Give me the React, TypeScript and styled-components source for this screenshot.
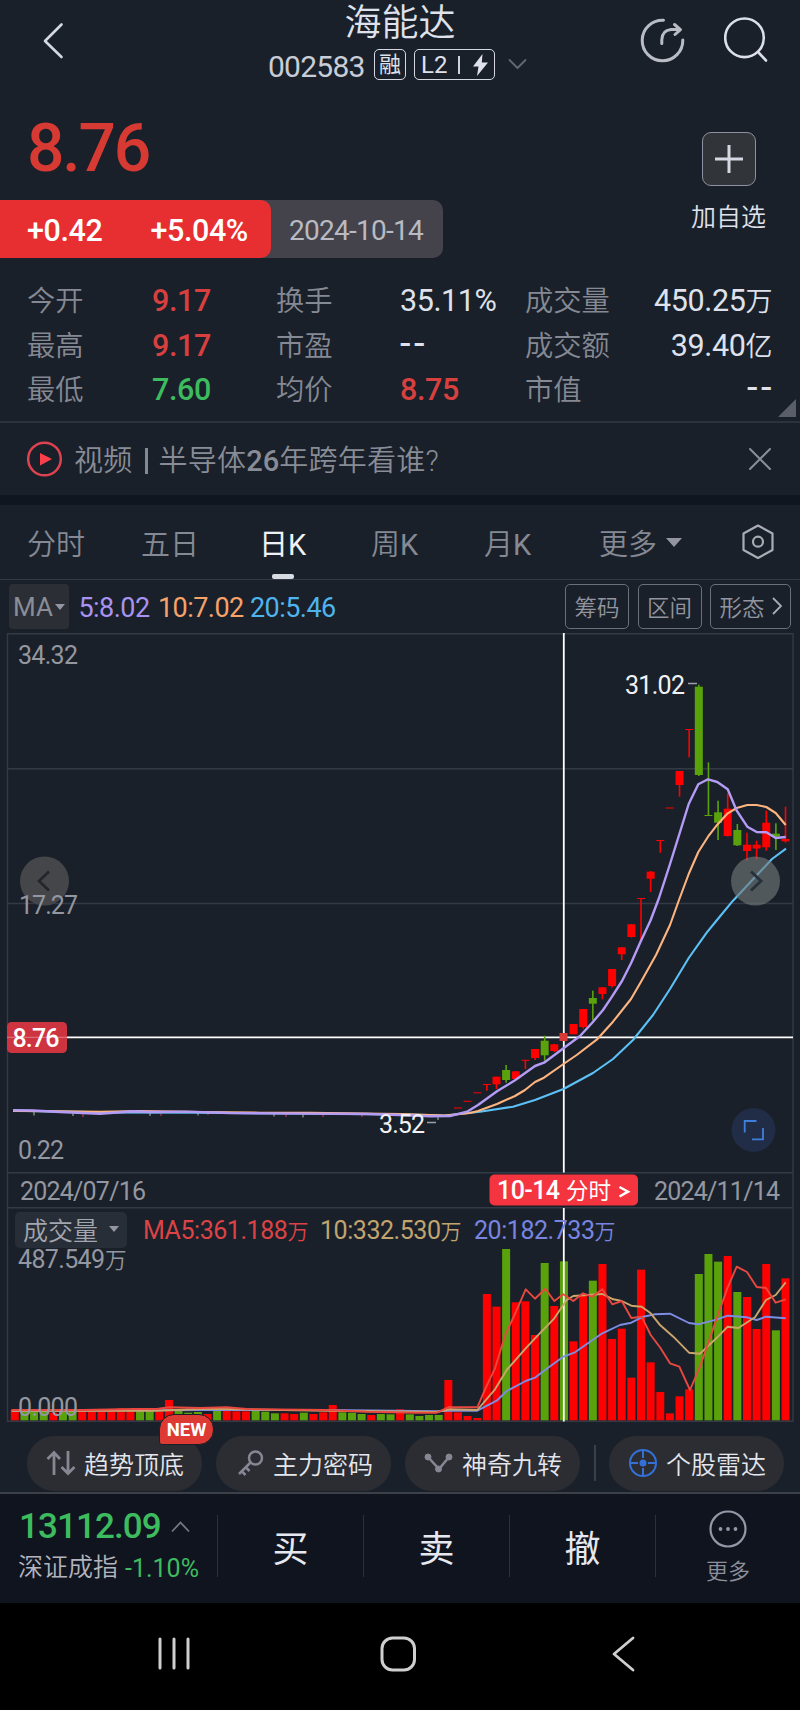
import React from "react";
import styled, { createGlobalStyle, css } from "styled-components";

const GlobalStyle = createGlobalStyle`
  * { box-sizing: border-box; }
  body {
    margin: 0;
    background: #000;
    font-family: Roboto, "Noto Sans CJK SC", sans-serif;
    color: #dfe2ec;
    -webkit-font-smoothing: antialiased;
  }
`;

const c = {
  bg: "#1a2029",
  line: "#343a45",
  muted: "#858994",
  text: "#dfe2ec",
  red: "#d8403f",
  green: "#3dbb5f",
  up: "#fe0000",
  down: "#5aa20b",
};

const Screen = styled.main`
  width: 800px;
  height: 1710px;
  display: flex;
  flex-direction: column;
  background: ${c.bg};
  overflow: hidden;
`;

/* ---------- header ---------- */
const Header = styled.header`
  display: grid;
  grid-template-columns: 200px 1fr 200px;
  height: 100px;
`;
const BackButton = styled.div`
  padding: 21px 0 0 40px;
`;
const TitleBlock = styled.div`
  display: flex;
  flex-direction: column;
  align-items: center;
`;
const StockName = styled.h1`
  margin: 0;
  padding-top: 2px;
  font-size: 37px;
  font-weight: 350;
  line-height: 44px;
`;
const CodeRow = styled.div`
  display: flex;
  align-items: center;
  height: 36px;
  margin-right: 1px;
`;
const Code = styled.span`
  font-size: 30px;
  letter-spacing: -0.75px;
  width: 106px;
  padding-top: 5px;
  color: #c9cdd8;
`;
const Tag = styled.span<{ $w: number }>`
  display: flex;
  align-items: center;
  justify-content: center;
  width: ${(p) => p.$w}px;
  height: 31px;
  margin-right: 8px;
  border: 1.6px solid #d5d8e0;
  border-radius: 5px;
  font-size: 22px;
  line-height: 28px;
  padding-top: 1px;
`;
const TagLevel = styled.span`
  font-size: 24px;
`;
const TagDivider = styled.i`
  width: 1.5px;
  height: 18px;
  margin: 0 13px 0 11px;
  background: #cfd2db;
`;
const HeaderActions = styled.div`
  display: flex;
  gap: 37px;
  padding: 15px 0 0 39px;
`;

/* ---------- price ---------- */
const Hero = styled.section`
  display: flex;
  justify-content: space-between;
  height: 158px;
`;
const HeroPrice = styled.div`
  height: 100px;
  padding: 9px 0 0 27px;
  font-size: 66px;
  line-height: 80px;
  font-weight: 500;
  letter-spacing: -2.2px;
  color: #d63a33;
`;
const ChangeBar = styled.div`
  display: flex;
  width: 443px;
  height: 58px;
  border-radius: 0 10px 10px 0;
  background: #44434b;
  line-height: 61px;
`;
const ChangePill = styled.div`
  display: flex;
  gap: 48px;
  width: 271px;
  padding-left: 27px;
  border-radius: 0 10px 10px 0;
  background: #e72e30;
  color: #fff;
  font-size: 30.5px;
  font-weight: 500;
  letter-spacing: -0.4px;
`;
const ChangeDate = styled.div`
  padding-left: 18px;
  font-size: 28px;
  letter-spacing: -0.75px;
  color: #b9bac2;
`;
const AddBlock = styled.div`
  display: flex;
  flex-direction: column;
  align-items: center;
  width: 143px;
  padding-top: 32px;
  font-size: 25px;
  font-weight: 350;
  line-height: 32px;
`;
const AddButton = styled.div`
  display: flex;
  align-items: center;
  justify-content: center;
  width: 54px;
  height: 54px;
  margin-bottom: 16px;
  border: 1.5px solid #8d90a0;
  border-radius: 9px;
  background: #313539;
`;

/* ---------- stats ---------- */
const Stats = styled.section`
  position: relative;
  display: grid;
  grid-template-columns: 125px 124px 124px 125px 85px 162px;
  grid-auto-rows: 44.5px;
  height: 165px;
  padding: 20px 28px 0 27px;
  border-bottom: 2px solid #2c323c;
  line-height: 44px;
`;
const StatLabel = styled.span`
  padding-top: 2px;
  font-size: 28.3px;
  font-weight: 350;
  color: ${c.muted};
  white-space: nowrap;
`;
const StatValue = styled.span<{ $color?: string; $end?: boolean }>`
  font-size: 30.5px;
  font-weight: ${(p) => (p.$color ? 500 : 400)};
  letter-spacing: -0.4px;
  padding-top: 1px;
  color: ${(p) => p.$color ?? c.text};
  text-align: ${(p) => (p.$end ? "right" : "left")};
  white-space: nowrap;
`;
const Dashes = styled.span`
  font-size: 38px;
  line-height: 30px;
  letter-spacing: 3.5px;
  margin-right: -3px;
`;
const Unit = styled.span`
  font-size: 27px;
  font-weight: 350;
`;
const Corner = styled.i`
  position: absolute;
  right: 4px;
  bottom: 4px;
  border: 9px solid transparent;
  border-right-color: #5a5e69;
  border-bottom-color: #5a5e69;
`;

/* ---------- news ---------- */
const News = styled.section`
  display: flex;
  align-items: center;
  height: 82px;
  padding: 0 29px 0 27px;
  border-bottom: 10px solid #101620;
`;
const NewsText = styled.span`
  flex: 1;
  padding: 4px 0 0 11px;
  font-size: 29px;
  font-weight: 350;
  line-height: 40px;
  letter-spacing: 0.25px;
  color: #888c96;
`;
const NewsBar = styled.i`
  display: inline-block;
  width: 3px;
  height: 26px;
  margin: 0 11px 0 12px;
  background: #858994;
  vertical-align: -3px;
`;
const NewsNumber = styled.span`
  font-weight: 500;
  letter-spacing: 0;
`;

/* ---------- tabs ---------- */
const Tabs = styled.nav`
  display: grid;
  grid-template-columns: 114px 118px 112px 113px 115px 143px 1fr;
  height: 75px;
  padding-left: 27px;
  border-bottom: 1.5px solid ${c.line};
`;
const Tab = styled.span<{ $active?: boolean }>`
  position: relative;
  display: flex;
  align-items: center;
  gap: 9px;
  font-size: 29px;
  font-weight: ${(p) => (p.$active ? 400 : 350)};
  color: ${(p) => (p.$active ? "#f0f1f6" : c.muted)};
  ${(p) =>
    p.$active &&
    css`
      &::after {
        content: "";
        position: absolute;
        left: 13px;
        bottom: 0;
        width: 22px;
        height: 5px;
        border-radius: 2px;
        background: #d9dbe2;
      }
    `}
`;
const Latin = styled.span`
  font-weight: 400;
`;
const Caret = styled.i<{ $w: number }>`
  display: inline-block;
  border: ${(p) => p.$w / 2}px solid transparent;
  border-top: ${(p) => p.$w * 0.62}px solid #9396a0;
  border-bottom: 0;
`;

/* ---------- indicator row ---------- */
const IndicatorRow = styled.div`
  display: flex;
  align-items: center;
  height: 53px;
  padding: 0 9px;
`;
const MaSelect = styled.span`
  display: flex;
  align-items: center;
  justify-content: center;
  gap: 2px;
  width: 60px;
  height: 45px;
  margin-right: 9.5px;
  border-radius: 4px;
  background: #2b2e35;
  font-size: 26px;
  color: #898d97;
`;
const MaValue = styled.span<{ $color: string; $w: number }>`
  width: ${(p) => p.$w}px;
  padding-top: 2px;
  font-size: 27px;
  letter-spacing: -0.55px;
  color: ${(p) => p.$color};
`;
const ChipRow = styled.div`
  display: flex;
  gap: 8.5px;
  margin-left: auto;
`;
const Chip = styled.span<{ $w: number }>`
  display: flex;
  align-items: center;
  justify-content: center;
  gap: 7px;
  width: ${(p) => p.$w}px;
  height: 45px;
  padding-bottom: 2px;
  border: 1.5px solid #6b6f7a;
  border-radius: 5px;
  font-size: 22.5px;
  font-weight: 350;
  color: #92959f;
`;

/* ---------- charts ---------- */
const Charts = styled.section`
  position: relative;
  height: 789px;
`;
const ChartSvg = styled.svg`
  display: block;
`;
const VolumeLegend = styled.div`
  position: absolute;
  left: 15px;
  top: 579px;
  display: flex;
  align-items: center;
  height: 36px;
  font-size: 25px;
  white-space: nowrap;
`;
const VolumeSelect = styled.span`
  display: flex;
  align-items: center;
  justify-content: space-between;
  width: 112px;
  height: 36px;
  padding: 0 8px 2px;
  margin-right: 16px;
  border-radius: 5px;
  background: #282e37;
  font-weight: 350;
  color: #a3a6ae;
`;
const VolumeMa = styled.span<{ $color: string; $w: number }>`
  width: ${(p) => p.$w}px;
  letter-spacing: -0.45px;
  color: ${(p) => p.$color};
`;
const VolUnit = styled.span`
  font-size: 21px;
  font-weight: 350;
`;

/* ---------- tools ---------- */
const ToolRow = styled.div`
  display: flex;
  align-items: flex-start;
  height: 72px;
  padding: 14px 0 0 27px;
  border-bottom: 2px solid #3b4049;
`;
const Tool = styled.div`
  position: relative;
  display: flex;
  flex: none;
  align-items: center;
  gap: 8px;
  width: 175px;
  height: 55px;
  padding: 0 0 1px 19px;
  margin-right: 14px;
  border-radius: 27px;
  background: #2b2d33;
  font-size: 25px;
  font-weight: 350;
  white-space: nowrap;
  color: #e4e6ee;
`;
const ToolDivider = styled.i`
  flex: none;
  width: 1.5px;
  height: 36px;
  margin: 9px 13.5px 0 0;
  background: #3a3f49;
`;
const NewBadge = styled.span`
  position: absolute;
  left: 132px;
  top: -22px;
  width: 55px;
  height: 31px;
  border: 1px solid #1a1f29;
  border-radius: 15px 15px 15px 3px;
  background: #dd3a34;
  color: #fff;
  font-size: 18.5px;
  font-weight: 700;
  line-height: 31px;
  text-align: center;
`;

/* ---------- bottom bar ---------- */
const TradeBar = styled.footer`
  display: flex;
  height: 109px;
  background: #10141f;
`;
const IndexBlock = styled.div`
  width: 217px;
  padding: 10px 0 0 19px;
`;
const IndexValue = styled.div`
  display: flex;
  align-items: center;
  gap: 10px;
  height: 44px;
  font-size: 35px;
  letter-spacing: -0.9px;
  color: ${c.green};
  font-weight: 500;
`;
const IndexName = styled.div`
  display: flex;
  gap: 7px;
  margin-left: -1px;
  font-size: 25px;
  font-weight: 350;
  line-height: 40px;
  white-space: nowrap;
  color: #b2b5be;
`;
const IndexPct = styled.span`
  color: ${c.green};
  font-weight: 400;
  padding-top: 1px;
`;
const TradeButton = styled.div`
  display: flex;
  align-items: center;
  justify-content: center;
  width: 146px;
  height: 62px;
  margin-top: 21px;
  border-left: 1.5px solid #2b303b;
  font-size: 36px;
  color: #e6e8ef;
`;
const MoreButton = styled.div`
  display: flex;
  flex-direction: column;
  align-items: center;
  width: 145px;
  height: 62px;
  margin-top: 21px;
  border-left: 1.5px solid #2b303b;
  font-size: 22px;
  font-weight: 350;
  line-height: 30px;
  color: #8d909c;
`;
const MoreIcon = styled.svg`
  flex: none;
  margin: -5px 0 9px;
`;
const SystemNav = styled.div`
  display: flex;
  align-items: center;
  flex: 1;
  padding: 0 165px 5px 158px;
  justify-content: space-between;
  background: #000;
`;

/* ---------- chart data (the svg viewBox starts at y = TOP) ---------- */
const TOP = 633;
const xAt = (i: number) => 14.8 + i * 9.634;

type Candle = [i: number, up: boolean, bodyTop: number, bodyBottom: number, high: number, low: number];
const candles: Candle[] = [
  [46, true, 1107.5, 1108.5, 1108, 1108], [47, true, 1100.8, 1101.8, 1101, 1101],
  [48, true, 1092.3, 1093.3, 1093, 1093], [49, true, 1084, 1085, 1084, 1090.7],
  [50, true, 1076.7, 1084.3, 1076.7, 1089], [51, false, 1070, 1080, 1065, 1082.7],
  [52, true, 1071.3, 1079, 1071, 1079], [53, true, 1059.8, 1060.8, 1060, 1069],
  [54, true, 1049, 1058, 1049, 1060], [55, false, 1040.7, 1055.3, 1035.7, 1060.7],
  [56, true, 1044.3, 1051, 1044, 1052], [58, true, 1024, 1034.3, 1024, 1034],
  [59, true, 1009, 1027, 1009, 1028.5], [60, false, 998, 1003.7, 990.7, 1020],
  [61, true, 987.3, 994, 987, 999.3], [62, true, 969, 986, 969, 987.5],
  [63, true, 947.3, 954.3, 947, 960], [64, true, 924.3, 937, 924, 937.5],
  [65, true, 898, 899, 898, 940], [66, true, 871.7, 878.7, 871, 892],
  [67, true, 840, 841, 840, 852.7], [68, true, 807.5, 808.5, 808, 808],
  [69, true, 771, 785, 771, 796.7], [70, true, 729, 730, 729, 757.3],
  [71, false, 686.7, 775, 684.7, 776], [72, false, 815, 816, 762.3, 816],
  [73, false, 812.3, 822.7, 800.7, 840], [74, true, 808.7, 836, 793.3, 836.5],
  [75, false, 830, 845.3, 824, 846], [76, true, 844.7, 851, 832.7, 860.7],
  [77, true, 844.7, 848.5, 840.7, 859.3], [78, true, 822.7, 847.3, 810.7, 850.7],
  [79, false, 833.7, 836.7, 823.3, 850], [80, true, 839, 841.3, 806.7, 842.7],
];

const ma5 = "13,1110.3 33,1110.5 60,1112 83,1113 100,1113.7 117,1112.5 133,1111.2 150,1112 185,1111.6 230,1113 300,1113.6 367,1114 400,1115 430,1116.3 450,1116 467,1111.7 478,1105 497,1091.3 515,1080.3 535,1066 544,1062.7 563.5,1048.3 580,1036 592,1023 603,1010 612,996.7 622,981 631,963.3 641,940.7 650.5,920.5 659,898 669.7,865 679.7,833 688.7,804 698.3,784.3 708,779.3 717.3,782 727.7,789.3 736.7,810.7 747.3,826.7 756.7,832 766.3,832.3 775.7,838 785.7,837";
const ma10 = "13,1111 60,1111.3 100,1111.8 140,1111 200,1112 260,1112.7 310,1112.8 400,1114 445,1115.5 470,1113 478,1111 497,1104 515,1096 525,1090 535,1082 544,1077.7 563.5,1064 576.7,1055 596.7,1039.7 613,1021.7 631,999 641,981.7 656,955 670,925 679,900 688.7,874 698.3,852 708,836.7 717.3,824.7 727.7,813.3 736.7,808 747.3,805 756.7,805 766.3,807 775.7,813 785.7,825";
const ma20 = "13,1110.6 100,1112.4 200,1112.8 300,1113.4 400,1114.4 445,1115.5 480,1111.7 513,1106.7 535,1100 563.5,1089 593,1073 613,1059 633,1040 653,1015 670,989 688.7,958 706.7,932.7 717,920 733,900.7 757,875 772,859 786,848.7";

const G = false, R = true;
const smallVolumes: [boolean, number][] = [
  [R, 629], [G, 632], [G, 632], [G, 632], [R, 638], [G, 634], [G, 632], [R, 633], [R, 633], [R, 633],
  [R, 632], [R, 625], [R, 632], [G, 632], [G, 632], [R, 634], [R, 600], [G, 632], [G, 638], [G, 636],
  [R, 642], [G, 632], [R, 633], [R, 634], [R, 634], [G, 633], [G, 635], [G, 640], [R, 640], [R, 642],
  [G, 638], [R, 642], [R, 637], [R, 615], [G, 637], [G, 638], [G, 642], [R, 645], [G, 642], [G, 643],
  [R, 628], [G, 643], [G, 648], [G, 645], [G, 645],
];
const largeVolumes: [boolean, number][] = [
  [R, 540], [R, 637], [R, 648], [R, 654], [R, 282], [R, 320], [G, 147], [R, 307], [R, 304], [R, 405],
  [G, 189], [R, 318], [G, 184], [R, 424], [R, 287], [G, 242], [R, 192], [R, 417], [R, 386], [R, 533],
  [R, 209], [R, 487], [R, 576], [R, 640], [R, 589], [R, 568], [G, 222], [G, 162], [G, 185], [R, 168],
  [G, 276], [R, 291], [R, 387], [R, 192], [G, 391], [R, 235],
];
const volumes = [...smallVolumes, ...largeVolumes];

const scaled = (pts: number[][], dx: number) =>
  pts.map(([x, y]) => `${(dx + x / 3).toFixed(1)},${(1200 + y / 3).toFixed(1)}`).join(" ");
const quiet = [[35, 630], [250, 630], [400, 627], [470, 627], [508, 622], [600, 624], [680, 622], [740, 627], [980, 630], [1100, 635], [1250, 638], [1310, 638]];
const vol5 = scaled([...quiet, [1350, 620]], 0) + " " + scaled([[30, 622], [112, 622], [141, 555], [165, 505], [196, 405], [228, 335], [257, 268], [285, 296], [316, 266], [343, 303], [370, 283], [400, 303], [429, 280], [456, 290], [487, 268], [517, 313], [545, 303], [574, 354], [605, 350], [632, 405], [661, 443], [690, 490], [718, 500], [750, 570], [780, 500], [832, 350], [863, 262], [890, 200], [921, 216], [950, 261], [978, 264], [1007, 308], [1037, 298]], 440);
const vol10 = scaled([[35, 632], [470, 632], [620, 626], [980, 632], [1310, 636]], 0) + " " + scaled([[30, 628], [112, 630], [165, 568], [200, 510], [257, 445], [285, 415], [343, 355], [380, 300], [400, 288], [487, 282], [520, 298], [545, 303], [574, 317], [605, 320], [632, 340], [661, 376], [700, 410], [747, 458], [780, 461], [832, 412], [863, 380], [895, 384], [945, 352], [978, 300], [1007, 285], [1037, 247]], 440);
const vol20 = scaled([[35, 633], [620, 630], [980, 630], [1310, 634]], 0) + " " + scaled([[30, 632], [112, 632], [170, 602], [200, 573], [257, 543], [285, 533], [312, 512], [370, 470], [405, 457], [487, 400], [540, 375], [574, 368], [610, 350], [645, 343], [690, 341], [747, 369], [774, 373], [832, 358], [863, 347], [921, 352], [950, 360], [978, 350], [1037, 355]], 440);

const ChartLabel = styled.text<{ $color?: string }>`
  font-size: 25px;
  fill: ${(p) => p.$color ?? "#9497a0"};
`;

function Line({ points, color, width = 2.1 }: { points: string; color: string; width?: number }) {
  return <polyline points={points} fill="none" stroke={color} strokeWidth={width} strokeLinejoin="round" />;
}

function StockChart() {
  return (
    <ChartSvg width="800" height="789" viewBox={`0 ${TOP} 800 789`}>
      <g stroke={c.line} strokeWidth="1.4" fill="none">
        <path d="M7.5 1421.2V633.7H793V1421.2Z" />
        <path d="M7 768.7H793M7 903.5H793M7 1172.7H793M7 1207.7H793" />
      </g>

      <circle cx="44.5" cy="881" r="24.5" fill="#44464a" />
      <path d="M49 871.5L39 881L49 890.5" fill="none" stroke="#22262c" strokeWidth="2.6" />
      <ChartLabel x="18" y="664" textLength="60">34.32</ChartLabel>
      <ChartLabel x="19" y="914" textLength="59">17.27</ChartLabel>
      <ChartLabel x="18" y="1159" textLength="46">0.22</ChartLabel>
      <ChartLabel x="20" y="1199.5" textLength="126">2024/07/16</ChartLabel>
      <ChartLabel x="654" y="1199.5" textLength="126">2024/11/14</ChartLabel>

      <path d="M7 1037.3H793" stroke="#fff" strokeWidth="1.8" />
      <path d="M563.8 633V1172.5" stroke="#fff" strokeWidth="1.8" />

      {candles.map(([i, up, top, bottom, high, low]) => (
        <g key={i} fill={up ? c.up : c.down}>
          <rect x={xAt(i) - 4} y={top} width="8" height={bottom - top} />
          <rect x={xAt(i) - 0.8} y={high} width="1.6" height={low - high} />
        </g>
      ))}
      <g stroke="#a8324e" strokeWidth="1.3">
        <path d="M83 1112V1117M161 1112V1116M208 1112V1115M286 1113V1117M323 1114V1117M362 1114V1117" />
        <path d="M34 1111V1115.5M73 1112V1116M150 1112V1116M198 1112V1115.5M274 1113V1116.5M303 1113V1117.5M438 1116V1120" stroke="#8a9a80" />
      </g>
      <rect x="559.5" y="1033" width="8" height="8" fill="#d73a36" />
      <Line points={ma20} color="#5cc1f6" />
      <Line points={ma10} color="#fdb47f" />
      <Line points={ma5} color="#b49bf5" width={2.4} />

      <ChartLabel $color="#f0f1f5" x="625" y="694" textLength="60">31.02</ChartLabel>
      <path d="M688 683.5H697M427 1122.5H436" stroke="#9da0a8" strokeWidth="1.3" />
      <ChartLabel $color="#f0f1f5" x="379" y="1133" textLength="46">3.52</ChartLabel>

      <rect x="7" y="1022" width="60" height="31" rx="4.5" fill="#cd3440" />
      <path d="M7 1037.3H67" stroke="#de7d84" strokeWidth="1" />
      <ChartLabel $color="#fff" fontWeight="500" x="12.5" y="1046.5" textLength="47">8.76</ChartLabel>

      <rect x="489.5" y="1174.5" width="148.5" height="31" rx="5" fill="#f4343f" />
      <ChartLabel $color="#fff" fontWeight="500" x="497" y="1199" textLength="63">10-14</ChartLabel>
      <text x="566" y="1198.5" fontSize="22.5" fill="#fff">分时</text>
      <path d="M619.5 1187L628 1191.7L619.5 1196.5" fill="none" stroke="#fff" strokeWidth="2.5" />

      <circle cx="755.5" cy="881" r="24.5" fill="#747a7b" fillOpacity="0.62" />
      <path d="M751 871.5L761 881L751 890.5" fill="none" stroke="#25303a" strokeWidth="2.8" />
      <circle cx="753.5" cy="1130" r="22" fill="#212c46" />
      <path d="M744.7 1132.5V1121H756.5M752 1139.3H763V1128" fill="none" stroke="#3f7fdb" strokeWidth="1.8" />

      {volumes.map(([up, top], i) => (
        <rect key={i} x={xAt(i) - 4} y={1200 + top / 3} width="8" height={220.3 - top / 3} fill={up ? c.up : c.down} />
      ))}
      <path d="M563.8 1208V1421.5" stroke="#fff" strokeWidth="1.8" />
      <Line points={vol20} color="#7e8ce4" width={1.9} />
      <Line points={vol10} color="#caa56c" width={1.9} />
      <Line points={vol5} color="#e8483f" width={1.9} />
      <ChartLabel x="18" y="1268" textLength="87">487.549</ChartLabel>
      <text x="105" y="1267.5" fontSize="21.5" fontWeight="350" fill="#9497a0">万</text>
      <ChartLabel x="18" y="1416" textLength="60">0.000</ChartLabel>
    </ChartSvg>
  );
}

const thin = { fill: "none", strokeLinecap: "round", strokeLinejoin: "round" } as const;

export default function App() {
  return (
    <>
      <GlobalStyle />
      <Screen>
        <Header>
          <BackButton>
            <svg width="26" height="40" viewBox="0 0 26 40" {...thin} stroke="#d5d8e2" strokeWidth="2.6">
              <path d="M21.5 3.5L5 20L21.5 36" />
            </svg>
          </BackButton>
          <TitleBlock>
            <StockName>海能达</StockName>
            <CodeRow>
              <Code>002583</Code>
              <Tag $w={32}>融</Tag>
              <Tag $w={81}>
                <TagLevel>L2</TagLevel>
                <TagDivider />
                <svg width="15" height="22" viewBox="0 0 15 22" fill="#dfe2ec">
                  <path d="M9.5 0L0 12.5H5.5L4 22L15 8.5H8.8Z" />
                </svg>
              </Tag>
              <svg width="28" height="14" viewBox="0 0 28 14" {...thin} stroke="#636873" strokeWidth="1.8">
                <path d="M6.5 3L14.5 11L22.5 3" />
              </svg>
            </CodeRow>
          </TitleBlock>
          <HeaderActions>
            <svg width="48" height="50" viewBox="0 0 48 50" {...thin} stroke="#b9bcc5" strokeWidth="3">
              <path d="M24.5 5.2A20.3 20.3 0 1 0 43.8 25" />
              <path d="M22.8 28.5V25Q23 15.5 32 14.600H40M35.5 9.5L41.5 14.6L36 19.5" />
            </svg>
            <svg width="48" height="50" viewBox="0 0 48 50" {...thin} stroke="#dcdfe9" strokeWidth="2.6">
              <circle cx="20.5" cy="22.8" r="19.3" />
              <path d="M35 38L42 45.5" />
            </svg>
          </HeaderActions>
        </Header>

        <Hero>
          <div>
            <HeroPrice>8.76</HeroPrice>
            <ChangeBar>
              <ChangePill>
                <span>+0.42</span>
                <span>+5.04%</span>
              </ChangePill>
              <ChangeDate>2024-10-14</ChangeDate>
            </ChangeBar>
          </div>
          <AddBlock>
            <AddButton>
              <svg width="28" height="28" viewBox="0 0 28 28" stroke="#d5d8e2" strokeWidth="3">
                <path d="M14 0V28M0 14H28" />
              </svg>
            </AddButton>
            加自选
          </AddBlock>
        </Hero>

        <Stats>
          <StatLabel>今开</StatLabel>
          <StatValue $color={c.red}>9.17</StatValue>
          <StatLabel>换手</StatLabel>
          <StatValue>35.11%</StatValue>
          <StatLabel>成交量</StatLabel>
          <StatValue $end>450.25<Unit>万</Unit></StatValue>
          <StatLabel>最高</StatLabel>
          <StatValue $color={c.red}>9.17</StatValue>
          <StatLabel>市盈</StatLabel>
          <StatValue><Dashes>--</Dashes></StatValue>
          <StatLabel>成交额</StatLabel>
          <StatValue $end>39.40<Unit>亿</Unit></StatValue>
          <StatLabel>最低</StatLabel>
          <StatValue $color={c.green}>7.60</StatValue>
          <StatLabel>均价</StatLabel>
          <StatValue $color={c.red}>8.75</StatValue>
          <StatLabel>市值</StatLabel>
          <StatValue $end><Dashes>--</Dashes></StatValue>
          <Corner />
        </Stats>

        <News>
          <svg width="36" height="36" viewBox="0 0 36 36">
            <circle cx="17.5" cy="18" r="16.3" fill="none" stroke="#dd4250" strokeWidth="2.5" />
            <path d="M13 12L25 18L13 24.5Z" fill="#ff3e4b" />
          </svg>
          <NewsText>
            视频<NewsBar />半导体<NewsNumber>26</NewsNumber>年跨年看谁?
          </NewsText>
          <svg width="22" height="22" viewBox="0 0 22 22" {...thin} stroke="#898d98" strokeWidth="2">
            <path d="M1 1L21 21M21 1L1 21" />
          </svg>
        </News>

        <Tabs>
          <Tab>分时</Tab>
          <Tab>五日</Tab>
          <Tab $active><span>日<Latin>K</Latin></span></Tab>
          <Tab><span>周<Latin>K</Latin></span></Tab>
          <Tab><span>月<Latin>K</Latin></span></Tab>
          <Tab>更多<Caret $w={16} /></Tab>
          <Tab>
            <svg width="32" height="36" viewBox="0 0 32 36" {...thin} stroke="#a9acb5" strokeWidth="2.2">
              <path d="M16 1.5L30.5 9.5V26L16 34L1.5 26V9.5Z" />
              <circle cx="16" cy="17.7" r="5" />
            </svg>
          </Tab>
        </Tabs>

        <IndicatorRow>
          <MaSelect>MA<Caret $w={11} /></MaSelect>
          <MaValue $color="#a893f0" $w={79.5}>5:8.02</MaValue>
          <MaValue $color="#f7a269" $w={92}>10:7.02</MaValue>
          <MaValue $color="#4fb4ee" $w={90}>20:5.46</MaValue>
          <ChipRow>
            <Chip $w={64}>筹码</Chip>
            <Chip $w={64}>区间</Chip>
            <Chip $w={81}>
              形态
              <svg width="10" height="18" viewBox="0 0 10 18" fill="none" stroke="#a9acb5" strokeWidth="1.8">
                <path d="M1 1L9 9L1 17" />
              </svg>
            </Chip>
          </ChipRow>
        </IndicatorRow>

        <Charts>
          <StockChart />
          <VolumeLegend>
            <VolumeSelect>成交量<Caret $w={11} /></VolumeSelect>
            <VolumeMa $color="#dd4345" $w={177}>MA5:361.188<VolUnit>万</VolUnit></VolumeMa>
            <VolumeMa $color="#c2a470" $w={154}>10:332.530<VolUnit>万</VolUnit></VolumeMa>
            <VolumeMa $color="#7785e0" $w={150}>20:182.733<VolUnit>万</VolUnit></VolumeMa>
          </VolumeLegend>
        </Charts>

        <ToolRow>
          <Tool>
            <svg width="30" height="26" viewBox="0 0 30 26" fill="none" stroke="#858892" strokeWidth="2.8">
              <path d="M8 25V3M1.5 9L8 2.5L14 9M22 1V23M15.5 17L22 23.5L28.5 17" />
            </svg>
            趋势顶底
            <NewBadge>NEW</NewBadge>
          </Tool>
          <Tool>
            <svg width="30" height="28" viewBox="0 0 30 28" fill="none" stroke="#858892" strokeWidth="2.5">
              <circle cx="20.5" cy="9" r="6.5" />
              <path d="M15.5 13.5L4 25M6.5 22L10.5 26M10.5 18L14.5 22" />
            </svg>
            主力密码
          </Tool>
          <Tool>
            <svg width="30" height="22" viewBox="0 0 30 22" fill="#858892" stroke="#858892">
              <path d="M4 5L15 17L25 5" fill="none" strokeWidth="2.5" />
              <circle cx="4" cy="5" r="3" />
              <circle cx="14.5" cy="17" r="3" />
              <circle cx="25" cy="5" r="3" />
            </svg>
            神奇九转
          </Tool>
          <ToolDivider />
          <Tool>
            <svg width="30" height="28" viewBox="0 0 30 28" fill="none" stroke="#3470d6" strokeWidth="2">
              <circle cx="15" cy="14" r="13" />
              <path d="M15 1V9M15 19V27M2 14H10M20 14H28" />
              <circle cx="15" cy="14" r="2.5" fill="#3470d6" />
            </svg>
            个股雷达
          </Tool>
        </ToolRow>

        <TradeBar>
          <IndexBlock>
            <IndexValue>
              13112.09
              <svg width="19" height="13" viewBox="0 0 19 13" fill="none" stroke="#747884" strokeWidth="1.8">
                <path d="M1 11.5L9.5 2.5L18 11.5" />
              </svg>
            </IndexValue>
            <IndexName>深证成指<IndexPct>-1.10%</IndexPct></IndexName>
          </IndexBlock>
          <TradeButton>买</TradeButton>
          <TradeButton>卖</TradeButton>
          <TradeButton>撤</TradeButton>
          <MoreButton>
            <MoreIcon width="38" height="38" viewBox="0 0 38 38">
              <circle cx="19" cy="19" r="17.5" fill="none" stroke="#9497a5" strokeWidth="2.2" />
              <g fill="#9497a5">
                <circle cx="11.5" cy="19" r="1.9" />
                <circle cx="19" cy="19" r="1.9" />
                <circle cx="26.5" cy="19" r="1.9" />
              </g>
            </MoreIcon>
            更多
          </MoreButton>
        </TradeBar>

        <SystemNav>
          <svg width="34" height="36" viewBox="0 0 34 36" stroke="#cfcfcf" strokeWidth="3" strokeLinecap="round">
            <path d="M2 3V32M16 3V32M30 3V32" />
          </svg>
          <svg width="36" height="36" viewBox="0 0 36 36" fill="none" stroke="#cfcfcf" strokeWidth="3">
            <rect x="2" y="2" width="32.5" height="32" rx="10.5" />
          </svg>
          <svg width="31" height="36" viewBox="-7 0 31 36" {...thin} stroke="#cfcfcf" strokeWidth="2.8">
            <path d="M22 2L3 18L22 34" />
          </svg>
        </SystemNav>
      </Screen>
    </>
  );
}
